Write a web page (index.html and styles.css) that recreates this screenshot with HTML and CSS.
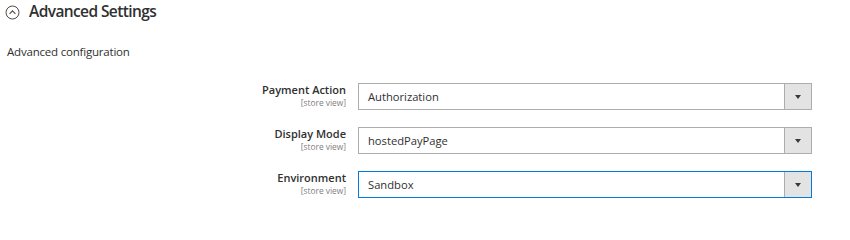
FILE: index.html
```html
<!DOCTYPE html>
<html>
<head>
<meta charset="utf-8">
<link rel="stylesheet" href="styles.css">
</head>
<body>
<div class="section">
  <div class="section-head">
    <svg class="toggle" width="15" height="15" viewBox="0 0 15 15">
      <circle cx="7.5" cy="7.5" r="6.5" fill="none" stroke="#514943" stroke-width="1"/>
      <path d="M4.6 8.8 L7.5 5.9 L10.4 8.8" fill="none" stroke="#514943" stroke-width="1.1"/>
    </svg>
    <span class="title">Advanced Settings</span>
  </div>
  <p class="comment">Advanced configuration</p>
  <div class="rows">
    <div class="row">
      <div class="label"><span class="name">Payment Action</span><span class="scope">[store view]</span></div>
      <div class="select"><span class="value">Authorization</span><span class="btn"><span class="arrow"></span></span></div>
    </div>
    <div class="row">
      <div class="label"><span class="name">Display Mode</span><span class="scope">[store view]</span></div>
      <div class="select"><span class="value">hostedPayPage</span><span class="btn"><span class="arrow"></span></span></div>
    </div>
    <div class="row">
      <div class="label"><span class="name">Environment</span><span class="scope">[store view]</span></div>
      <div class="select focus"><span class="value">Sandbox</span><span class="btn"><span class="arrow"></span></span></div>
    </div>
  </div>
</div>
</body>
</html>
```
FILE: styles.css
```css
body {
  margin: 0;
  background: #fff;
  font-family: "Open Sans", "Noto Sans", sans-serif;
  color: #303030;
}
.section-head {
  display: flex;
  align-items: flex-start;
  padding: 1px 0 0 5px;
}
.toggle {
  display: block;
  margin: 4px 9px 0 0;
}
.title {
  font-size: 15.5px;
  letter-spacing: -0.6px;
  line-height: 20px;
  font-weight: 600;
  color: #303030;
}
.comment {
  margin: 23px 0 0 7px;
  font-size: 11.5px;
  letter-spacing: -0.2px;
  line-height: 16px;
}
.rows {
  margin-top: 23px;
  display: flex;
  flex-direction: column;
  gap: 17px;
}
.row {
  display: grid;
  grid-template-columns: 346px 454px;
  column-gap: 12px;
}
.label {
  display: flex;
  flex-direction: column;
  align-items: flex-end;
}
.name {
  font-size: 11px;
  font-weight: 600;
  line-height: 13px;
}
.scope {
  margin-top: 1px;
  font-size: 8.4px;
  line-height: 11px;
  color: #808080;
}
.select {
  display: flex;
  height: 27px;
  box-sizing: border-box;
  border: 1px solid #adadad;
  background: #fff;
}
.select.focus {
  border-color: #007bdb;
}
.value {
  flex: 1;
  padding-left: 9px;
  font-size: 11.2px;
  line-height: 25px;
}
.btn {
  width: 26px;
  background: #e3e3e3;
  border-left: 1px solid #adadad;
  display: flex;
  align-items: center;
  justify-content: center;
}
.arrow {
  width: 0;
  height: 0;
  border-left: 3.5px solid transparent;
  border-right: 3.5px solid transparent;
  border-top: 4.5px solid #41362f;
}
```
